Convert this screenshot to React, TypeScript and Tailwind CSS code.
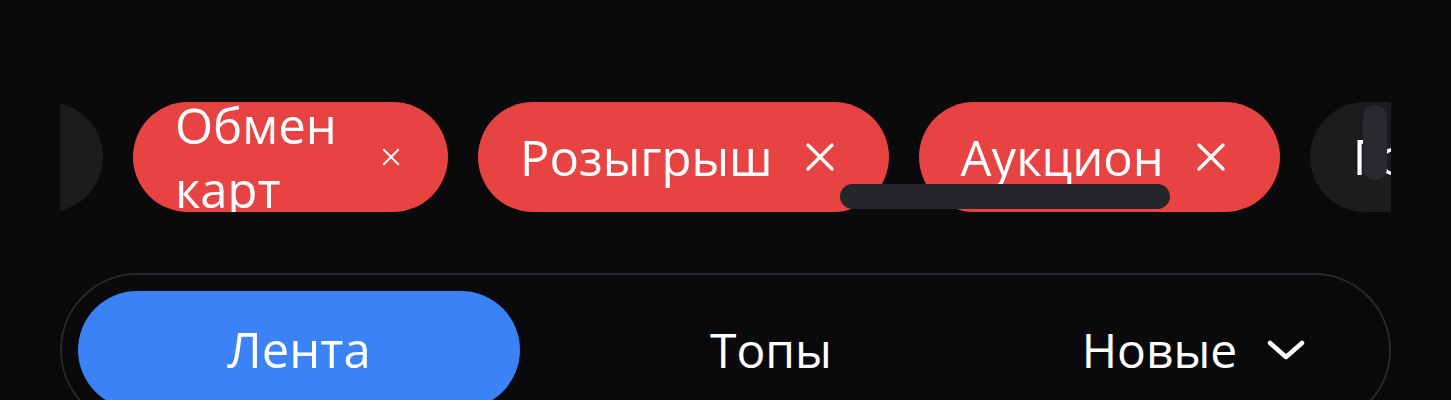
import React from 'react';

const CloseIcon = ({ size = 30 }: { size?: number }) => (
	<svg width={size} height={size} viewBox="0 0 30 30" className="shrink-0" fill="none" stroke="currentColor" strokeWidth={3.2} strokeLinecap="round">
		<path d="M3 3l24 24M27 3L3 27" />
	</svg>
);

const ChevronIcon = () => (
	<svg width="38" height="20" viewBox="0 0 38 20" fill="none" stroke="currentColor" strokeWidth={4.5} strokeLinecap="round" strokeLinejoin="round">
		<path d="M3 3l16 14L35 3" />
	</svg>
);

const tags = ['Розыгрыш', 'Аукцион'];

export default function App() {
	return (
		<div className="min-h-[400px] bg-[#0a0a0c] px-[60px] pt-[102px] font-['Open_Sans',sans-serif] text-white overflow-hidden">
			{/* tag filter row, scrolled a little to the right */}
			<div className="relative h-[110px] overflow-hidden">
				<div className="flex gap-[30px] h-full -ml-[127px]">
					<div className="shrink-0 w-[170px] h-full rounded-full bg-[#1c1c1f] flex items-center pl-[42px] text-[49px]">Все</div>

					<div className="shrink-0 w-[315px] h-full rounded-full bg-[#e84343] flex items-center pl-[42px] pr-[48px] gap-[32px] overflow-hidden">
						<span className="flex-1 text-[49px] leading-[64px]">Обмен карт</span>
						<CloseIcon size={18} />
					</div>

					{tags.map((t) => (
						<div key={t} className="shrink-0 h-full rounded-full bg-[#e84343] flex items-center pl-[42px] pr-[54px] gap-[32px]">
							<span className="text-[49px] leading-none whitespace-nowrap">{t}</span>
							<CloseIcon />
						</div>
					))}

					<div className="shrink-0 h-full rounded-full bg-[#1c1c1f] flex items-center pl-[43px] pr-[42px] text-[49px] whitespace-nowrap">Голосование</div>
				</div>

				{/* overlay scroll thumbs */}
				<div className="absolute left-[780px] top-[82px] w-[330px] h-[25px] rounded-full bg-[#26262a]" />
				<div className="absolute right-[4px] top-[3px] w-[24px] h-[75px] rounded-full bg-[#2a2a2e]" />
			</div>

			{/* feed switcher */}
			<div className="mt-[61px] border-2 border-[#2a2a2e] rounded-full p-[16px] flex items-center">
				<button className="w-[442px] h-[118px] shrink-0 rounded-full bg-[#3b82f6] text-[49px]">Лента</button>
				<button className="w-[502px] h-[118px] shrink-0 text-[48px]">Топы</button>
				<button className="flex-1 h-[118px] flex items-center justify-center gap-[30px] text-[48px] pr-[8px]">
					Новые
					<ChevronIcon />
				</button>
			</div>
		</div>
	);
}
